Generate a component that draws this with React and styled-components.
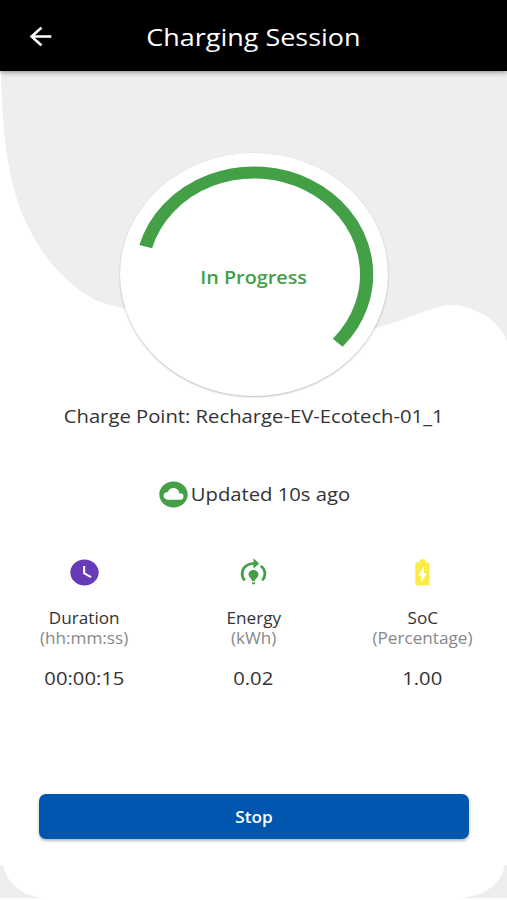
import React from 'react';
import styled, { createGlobalStyle } from 'styled-components';
import {
  MdArrowBack,
  MdCloudCircle,
  MdWatchLater,
  MdModelTraining,
  MdBatteryChargingFull,
} from 'react-icons/md';

const GlobalStyle = createGlobalStyle`
  * {
    box-sizing: border-box;
  }
  body {
    margin: 0;
    background: #fff;
    font-family: "Open Sans", "Noto Sans", sans-serif;
  }
`;

const stats = [
  { label: 'Duration', unit: '(hh:mm:ss)', value: '00:00:15', color: '#673ab7', Icon: MdWatchLater },
  { label: 'Energy', unit: '(kWh)', value: '0.02', color: '#43a047', Icon: MdModelTraining },
  { label: 'SoC', unit: '(Percentage)', value: '1.00', color: '#fbec48', Icon: MdBatteryChargingFull },
];

const App = () => {
  return (
    <>
      <GlobalStyle />
      <Screen>
        <Header>
          <BackButton aria-label="Back"><MdArrowBack /></BackButton>
          <Title>Charging Session</Title>
        </Header>
        <Content>
          <Backdrop viewBox="0 0 507 829" preserveAspectRatio="none">
            <path d="M1 0 C2 60 8 112 25 149 C42 187 70 218 100 231 C112 235 122 237 140 241 L350 264 C385 256 415 244 435 237 C448 233 459 233 472 238 C488 244 500 254 507 270 V0 Z" />
            <path d="M0 794 H3 C7 812 21 825 44 827 H0 Z" />
            <path d="M507 794 H505 C501 812 487 825 460 827 H507 Z" />
          </Backdrop>
          <Dial>
            <Arc viewBox="-122 -122 244 244" preserveAspectRatio="none">
              <path d="M-98.6 -27.9 A102.5 102.5 0 1 1 76.2 68.6" />
            </Arc>
            <Status>In Progress</Status>
          </Dial>
          <ChargePoint>Charge Point: Recharge-EV-Ecotech-01_1</ChargePoint>
          <Updated>
            <MdCloudCircle />
            <UpdatedText>Updated 10s ago</UpdatedText>
          </Updated>
          <Stats>
            {stats.map(({ label, unit, value, color, Icon }) => (
              <Stat key={label}>
                <StatIcon $color={color}><Icon /></StatIcon>
                <StatLabel>{label}</StatLabel>
                <StatUnit>{unit}</StatUnit>
                <StatValue>{value}</StatValue>
              </Stat>
            ))}
          </Stats>
          <StopButton><StopText>Stop</StopText></StopButton>
        </Content>
      </Screen>
    </>
  );
};

const Screen = styled.div`
  display: flex;
  flex-direction: column;
  width: 507px;
  height: 900px;
  overflow: hidden;
  background: #fff;
`;

const Header = styled.header`
  z-index: 1;
  display: grid;
  grid-template-columns: 80px 1fr 80px;
  align-items: center;
  height: 71px;
  flex-shrink: 0;
  background: #000;
  color: #fff;
  box-shadow: 0 1px 5px rgba(0, 0, 0, 0.45);
`;

const BackButton = styled.button`
  display: flex;
  justify-content: center;
  padding: 2px 0 0;
  border: 0;
  background: none;
  color: inherit;

  svg {
    width: 29px;
    height: 29px;
    transform: scaleX(1.12);
  }
`;

/* all the labels use slightly extended letters */
const Wide = styled.span`
  display: block;
  white-space: nowrap;
  transform: scaleX(1.1);
`;

const Title = styled(Wide).attrs({ as: 'h1' })`
  margin: 3px 0 0;
  text-align: center;
  font-size: 24.5px;
  font-weight: 400;
  line-height: 34px;
`;

const Content = styled.main`
  position: relative;
  isolation: isolate;
  display: flex;
  flex-direction: column;
  align-items: center;
  flex: 1;
  padding-top: 82px;
`;

const Backdrop = styled.svg`
  position: absolute;
  inset: 0;
  z-index: -1;
  width: 100%;
  height: 100%;
  fill: #eee;
`;

const Dial = styled.div`
  display: grid;
  place-items: center;
  width: 268px;
  height: 243px;
  flex-shrink: 0;
  border-radius: 50%;
  background: #fff;
  box-shadow: 0 1px 2px rgba(0, 0, 0, 0.28);
`;

const Arc = styled.svg`
  grid-area: 1 / 1;
  width: 268px;
  height: 243px;
  fill: none;
  stroke: #43a047;
  stroke-width: 12;
`;

const Status = styled(Wide)`
  grid-area: 1 / 1;
  margin-top: 4px;
  color: #43a047;
  font-size: 18px;
  font-weight: 600;
  line-height: 26px;
`;

const ChargePoint = styled(Wide)`
  margin-top: 7px;
  color: #333;
  font-size: 18.4px;
  line-height: 26px;
`;

const Updated = styled.div`
  display: flex;
  align-items: center;
  justify-content: center;
  gap: 9px;
  height: 30px;
  margin-top: 50px;
  padding-right: 6px;
  color: #43a047;

  svg {
    width: 31px;
    height: 31px;
    transform: scaleX(1.1);
  }
`;

const UpdatedText = styled(Wide)`
  color: #333;
  font-size: 18.4px;
  line-height: 26px;
`;

const Stats = styled.div`
  display: grid;
  grid-template-columns: repeat(3, 1fr);
  width: 100%;
  margin-top: 48px;
`;

const Stat = styled.div`
  display: flex;
  flex-direction: column;
  align-items: center;
`;

const StatIcon = styled.span`
  display: flex;
  color: ${(props) => props.$color};

  svg {
    width: 31px;
    height: 31px;
    transform: scaleX(1.1);
  }
`;

const StatLabel = styled(Wide)`
  margin-top: 20px;
  color: #333;
  font-size: 15.6px;
  line-height: 20px;
`;

const StatUnit = styled(Wide)`
  color: #888;
  font-size: 15.6px;
  line-height: 20px;
`;

const StatValue = styled(Wide)`
  margin-top: 17px;
  color: #333;
  font-size: 18.4px;
  line-height: 26px;
`;

const StopButton = styled.button`
  display: grid;
  place-items: center;
  width: 430px;
  height: 45px;
  margin-top: 103px;
  border: 0;
  border-radius: 7px;
  background: #0056ae;
  color: #fff;
  font-family: inherit;
  box-shadow: 0 2px 3px rgba(0, 0, 0, 0.28);
`;

const StopText = styled(Wide)`
  font-size: 15.6px;
  font-weight: 600;
  line-height: 24px;
`;

export default App;
